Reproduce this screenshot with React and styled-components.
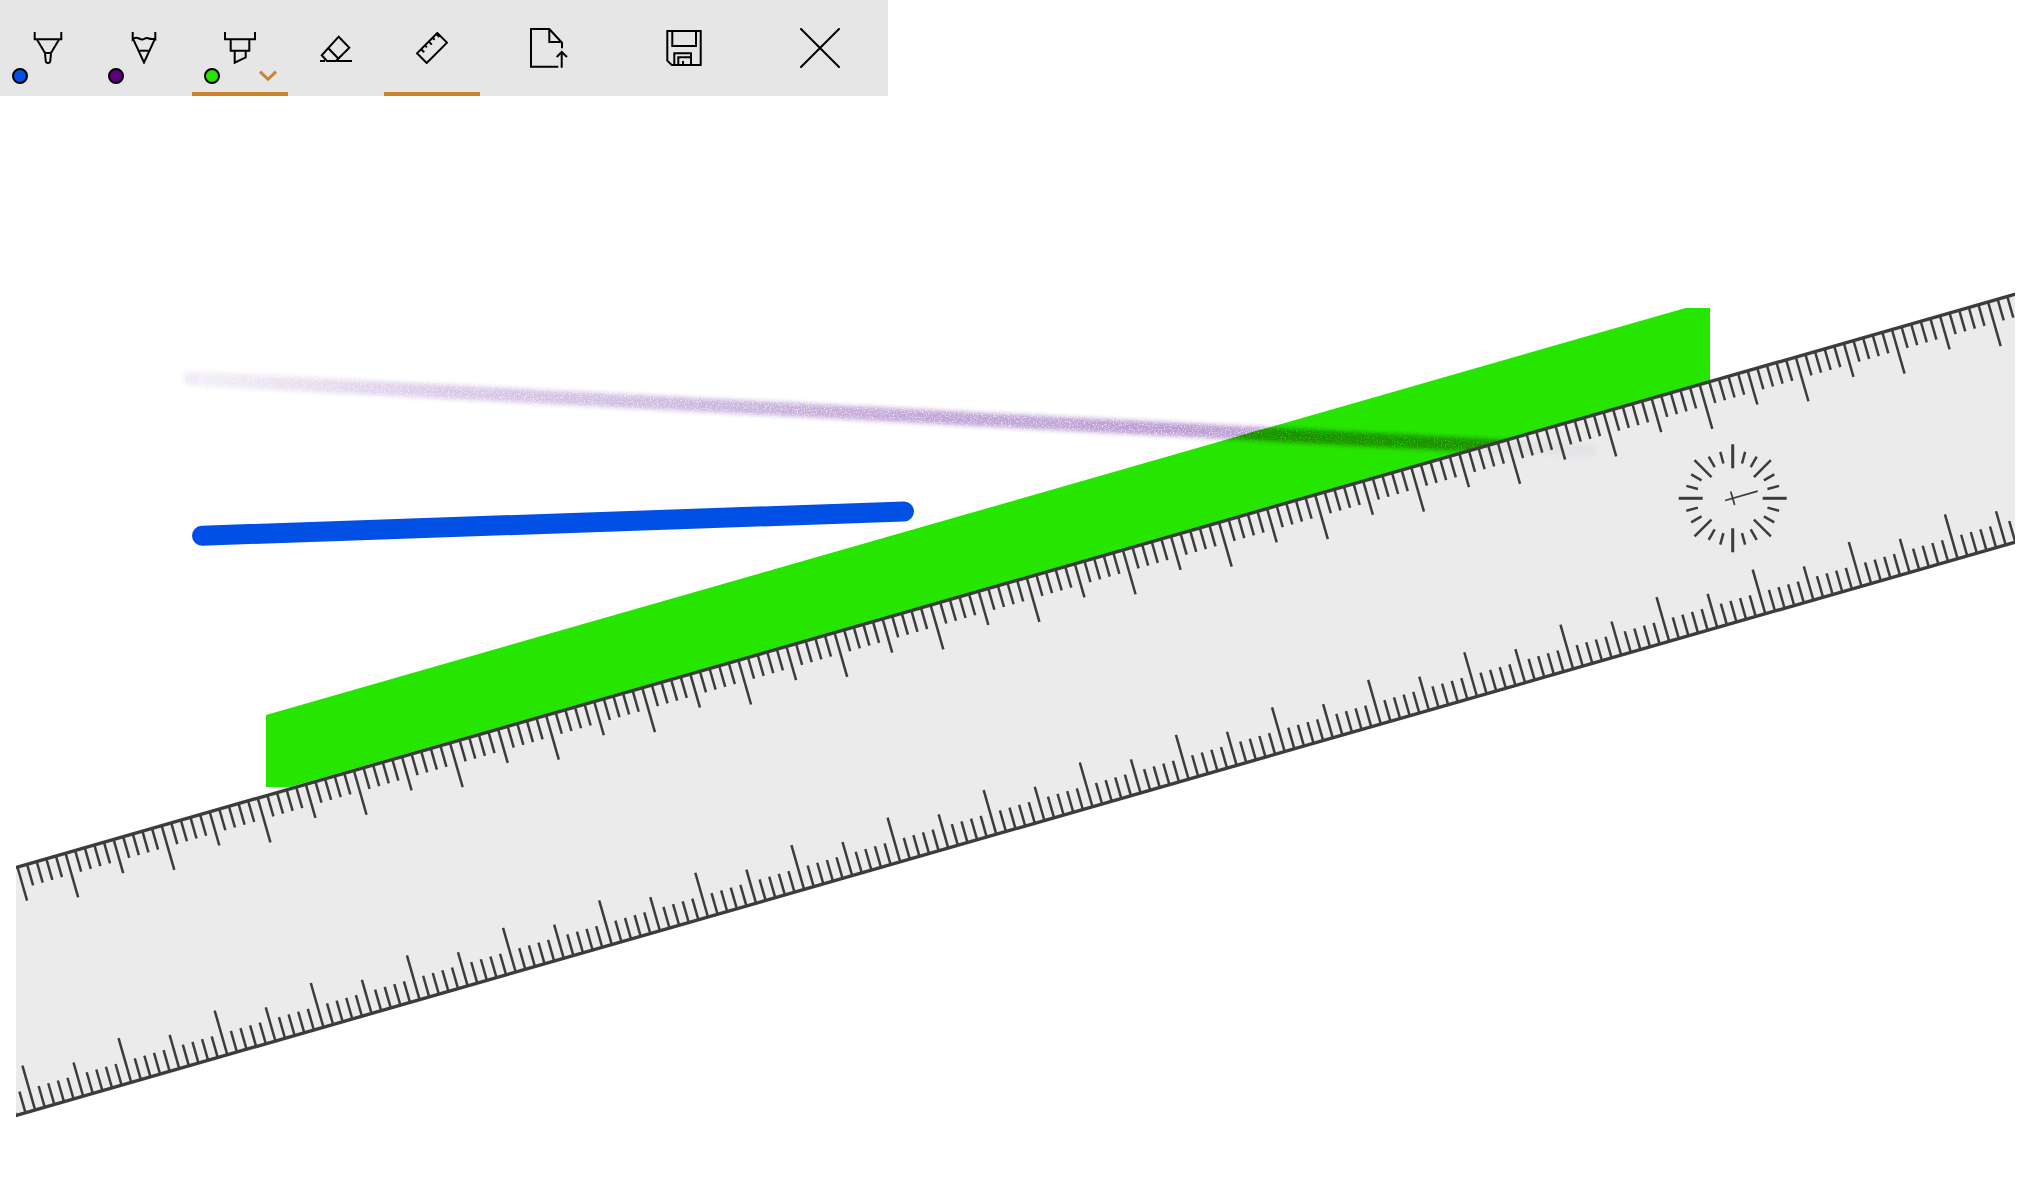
import React from "react";
import styled, { createGlobalStyle } from "styled-components";

const GlobalStyle = createGlobalStyle`
  html, body {
    margin: 0;
    padding: 0;
    background: #ffffff;
    overflow: hidden;
    font-family: "Liberation Sans", Arial, sans-serif;
  }
`;

const Toolbar = styled.div`
  display: flex;
  width: 888px;
  height: 96px;
  background: #e6e6e6;
`;

const ToolButton = styled.button`
  position: relative;
  display: flex;
  align-items: center;
  justify-content: center;
  width: ${(p) => (p.$wide ? 136 : 96)}px;
  height: 96px;
  padding: 0;
  border: 0;
  background: transparent;
  border-bottom: 4px solid ${(p) => (p.$active ? "#cc842c" : "transparent")};
  box-sizing: border-box;
  padding-top: 4px;
`;

const ColorDot = styled.span`
  position: absolute;
  left: 12px;
  top: 68px;
  width: 16px;
  height: 16px;
  box-sizing: border-box;
  border: 2px solid #000;
  border-radius: 50%;
  background: ${(p) => p.$color};
`;

const Chevron = styled.svg`
  position: absolute;
  left: 66px;
  top: 69px;
  width: 20px;
  height: 14px;
  fill: none;
  stroke: #cc842c;
  stroke-width: 3;
`;

const Icon = styled.svg`
  display: block;
  width: ${(p) => p.$size}px;
  height: ${(p) => p.$size}px;
  fill: none;
  stroke: #000;
  stroke-width: 2;
  stroke-linejoin: miter;
`;

const Canvas = styled.svg`
  display: block;
  width: 2031px;
  height: 1085px;
`;

const Highlight = styled.polygon`
  fill: #26e600;
`;

const PencilStroke = styled.line`
  stroke-width: 14;
  stroke-linecap: round;
  mix-blend-mode: multiply;
`;

const PenStroke = styled.line`
  stroke: #0050e6;
  stroke-width: 20;
  stroke-linecap: round;
`;

const RulerBody = styled.rect`
  fill: #e9e9e9;
  fill-opacity: 0.9;
`;

const RulerLine = styled.line`
  stroke: #3c3c3c;
  stroke-width: ${(p) => p.$weight || 2.5}px;
`;

const DEG = Math.PI / 180;
const RULER_HEIGHT = 238.4;

const tickLength = (k) => {
  const m = ((k % 10) + 10) % 10;
  if (m === 5) return 46;
  if (m === 0) return 35;
  return 22;
};

const ticks = [];
for (let k = -10; k < 220; k++) ticks.push({ k, u: 1.5 + k * 10, len: tickLength(k) });

const dialMarks = [];
for (let a = 0; a < 360; a += 15) {
  if (a % 45 === 0) dialMarks.push({ a, from: 30, to: 54 });
  else dialMarks.push({ a, from: 36, to: 48 });
}

const PenIcon = () => (
  <Icon $size={32} viewBox="0 0 32 32">
    <path d="M2.7 0V7.3H29.3V0" />
    <path d="M4.8 7.3L13 21H19L27.2 7.3" />
    <path d="M13 21L13.7 29C14 31.6 18 31.6 18.3 29L19 21" />
  </Icon>
);

const PencilIcon = () => (
  <Icon $size={32} viewBox="0 0 32 32">
    <path d="M4.7 0V7.3C7 5 9 5.5 11 6.5C13 7.5 14.5 8 16 7C17.5 6 19 5.6 21 6.5C23 7.4 25 6.5 27.3 7.3V0" />
    <path d="M5.3 7.3L16 30.5L26.7 7.3" />
    <path d="M11.3 18.7H20.7" />
  </Icon>
);

const HighlighterIcon = () => (
  <Icon $size={32} viewBox="0 0 32 32">
    <path d="M1 0V7.3H31V0" />
    <path d="M6.7 7.3V18.7H25.3V7.3" />
    <path d="M10.7 18.7V30.7L21.7 25.3V18.7" />
  </Icon>
);

const EraserIcon = () => (
  <Icon $size={32} viewBox="0 0 32 32">
    <path d="M18.7 4.7L29.3 15.7L16 29H7L1.7 23.3Z" />
    <path d="M8.3 16.3L19 27.3" />
    <path d="M0 29H5M17 29H32" />
  </Icon>
);

const RulerIcon = () => (
  <Icon $size={32} viewBox="0 0 32 32">
    <path d="M21.3 1L31 10.6L10.7 31L1 21.3Z" />
    <path d="M5.2 17.2L8.2 20.2M9 13.4L11 15.4M12.8 9.6L15.8 12.6M16.6 5.8L18.6 7.8M20.4 2L23.4 5" />
  </Icon>
);

const UploadIcon = () => (
  <Icon $size={40} viewBox="0 0 40 40">
    <path d="M34 20.3V14.7L21.3 1H3V38.7H30.3" />
    <path d="M21.3 1V14H34" />
    <path d="M33.7 39.7V24M28.7 29L33.7 24L39 29" />
  </Icon>
);

const SaveIcon = () => (
  <Icon $size={40} viewBox="0 0 40 40">
    <path d="M3.3 3H36.7V37H7.7L3.3 32.7Z" />
    <path d="M8.3 3V18H32V3" />
    <path d="M10.3 37V25.3H27V37" />
    <path d="M14.3 37V29.3H27M19 37V33" />
  </Icon>
);

const CloseIcon = () => (
  <Icon $size={40} viewBox="0 0 40 40">
    <path d="M1 1L39 39M39 1L1 39" strokeLinecap="round" />
  </Icon>
);

const Dial = () => (
  <g transform="translate(1732.7 402.3)">
    {dialMarks.map((m) => (
      <RulerLine
        key={m.a}
        $weight={m.a % 90 === 0 ? 3 : 2.5}
        x1={m.from * Math.sin(m.a * DEG)}
        y1={-m.from * Math.cos(m.a * DEG)}
        x2={m.to * Math.sin(m.a * DEG)}
        y2={-m.to * Math.cos(m.a * DEG)}
      />
    ))}
    <g transform="rotate(-16)">
      <RulerLine $weight={1.7} x1={-8} y1={0} x2={26} y2={0} />
      <RulerLine $weight={1.7} x1={0} y1={-7} x2={0} y2={7} />
    </g>
  </g>
);

const Ruler = () => (
  <g clipPath="url(#rulerClip)">
    <g transform="translate(16 771.4) rotate(-16)">
      <RulerBody x={-200} y={0} width={2500} height={RULER_HEIGHT} />
      {ticks.map((t) => (
        <React.Fragment key={t.k}>
          <RulerLine x1={t.u} y1={0} x2={t.u} y2={t.len} />
          <RulerLine x1={t.u} y1={RULER_HEIGHT - t.len} x2={t.u} y2={RULER_HEIGHT} />
        </React.Fragment>
      ))}
      <RulerLine $weight={3.4} x1={-200} y1={0} x2={2300} y2={0} />
      <RulerLine $weight={3.4} x1={-200} y1={RULER_HEIGHT} x2={2300} y2={RULER_HEIGHT} />
    </g>
  </g>
);

const App = () => {
  return (
    <main>
      <GlobalStyle />
      <Toolbar>
        <ToolButton>
          <PenIcon />
          <ColorDot $color="#0050e6" />
        </ToolButton>
        <ToolButton>
          <PencilIcon />
          <ColorDot $color="#5c0080" />
        </ToolButton>
        <ToolButton $active>
          <HighlighterIcon />
          <ColorDot $color="#26e600" />
          <Chevron viewBox="0 0 20 14">
            <path d="M2 2.7L10 10.3L18 2.7" />
          </Chevron>
        </ToolButton>
        <ToolButton>
          <EraserIcon />
        </ToolButton>
        <ToolButton $active>
          <RulerIcon />
        </ToolButton>
        <ToolButton $wide>
          <UploadIcon />
        </ToolButton>
        <ToolButton $wide>
          <SaveIcon />
        </ToolButton>
        <ToolButton $wide>
          <CloseIcon />
        </ToolButton>
      </Toolbar>
      {/* canvas starts under the toolbar, so y here is page y minus 96 */}
      <Canvas viewBox="0 0 2031 1085">
        <defs>
          <clipPath id="rulerClip">
            <rect x={16} y={0} width={1999} height={1085} />
          </clipPath>
          <linearGradient id="pencilFade" gradientUnits="userSpaceOnUse" x1={187} y1={282} x2={1595} y2={356}>
            <stop offset="0" stopColor="#6a2aa0" stopOpacity="0.08" />
            <stop offset="0.2" stopColor="#6a2aa0" stopOpacity="0.26" />
            <stop offset="0.55" stopColor="#6a2aa0" stopOpacity="0.42" />
            <stop offset="0.8" stopColor="#6a2aa0" stopOpacity="0.46" />
            <stop offset="1" stopColor="#6a2aa0" stopOpacity="0.42" />
          </linearGradient>
          <filter id="pencilGrain" filterUnits="userSpaceOnUse" x={150} y={250} width={1500} height={140}>
            <feGaussianBlur in="SourceGraphic" stdDeviation="2" result="soft" />
            <feTurbulence type="fractalNoise" baseFrequency="0.75" numOctaves="2" seed="4" result="noise" />
            <feColorMatrix
              in="noise"
              type="matrix"
              values="0 0 0 0 0  0 0 0 0 0  0 0 0 0 0  0 0 0 -2.6 2.3"
              result="grain"
            />
            <feComposite in="soft" in2="grain" operator="in" />
          </filter>
        </defs>
        <Highlight points="266,619 1685.6,212 1710,212 1710,286 290,691 266,691" />
        <PencilStroke x1={190} y1={282.5} x2={1590} y2={355} stroke="url(#pencilFade)" filter="url(#pencilGrain)" />
        <PenStroke x1={202} y1={439.7} x2={904} y2={415.5} />
        <Ruler />
        <Dial />
      </Canvas>
    </main>
  );
};

export default App;
